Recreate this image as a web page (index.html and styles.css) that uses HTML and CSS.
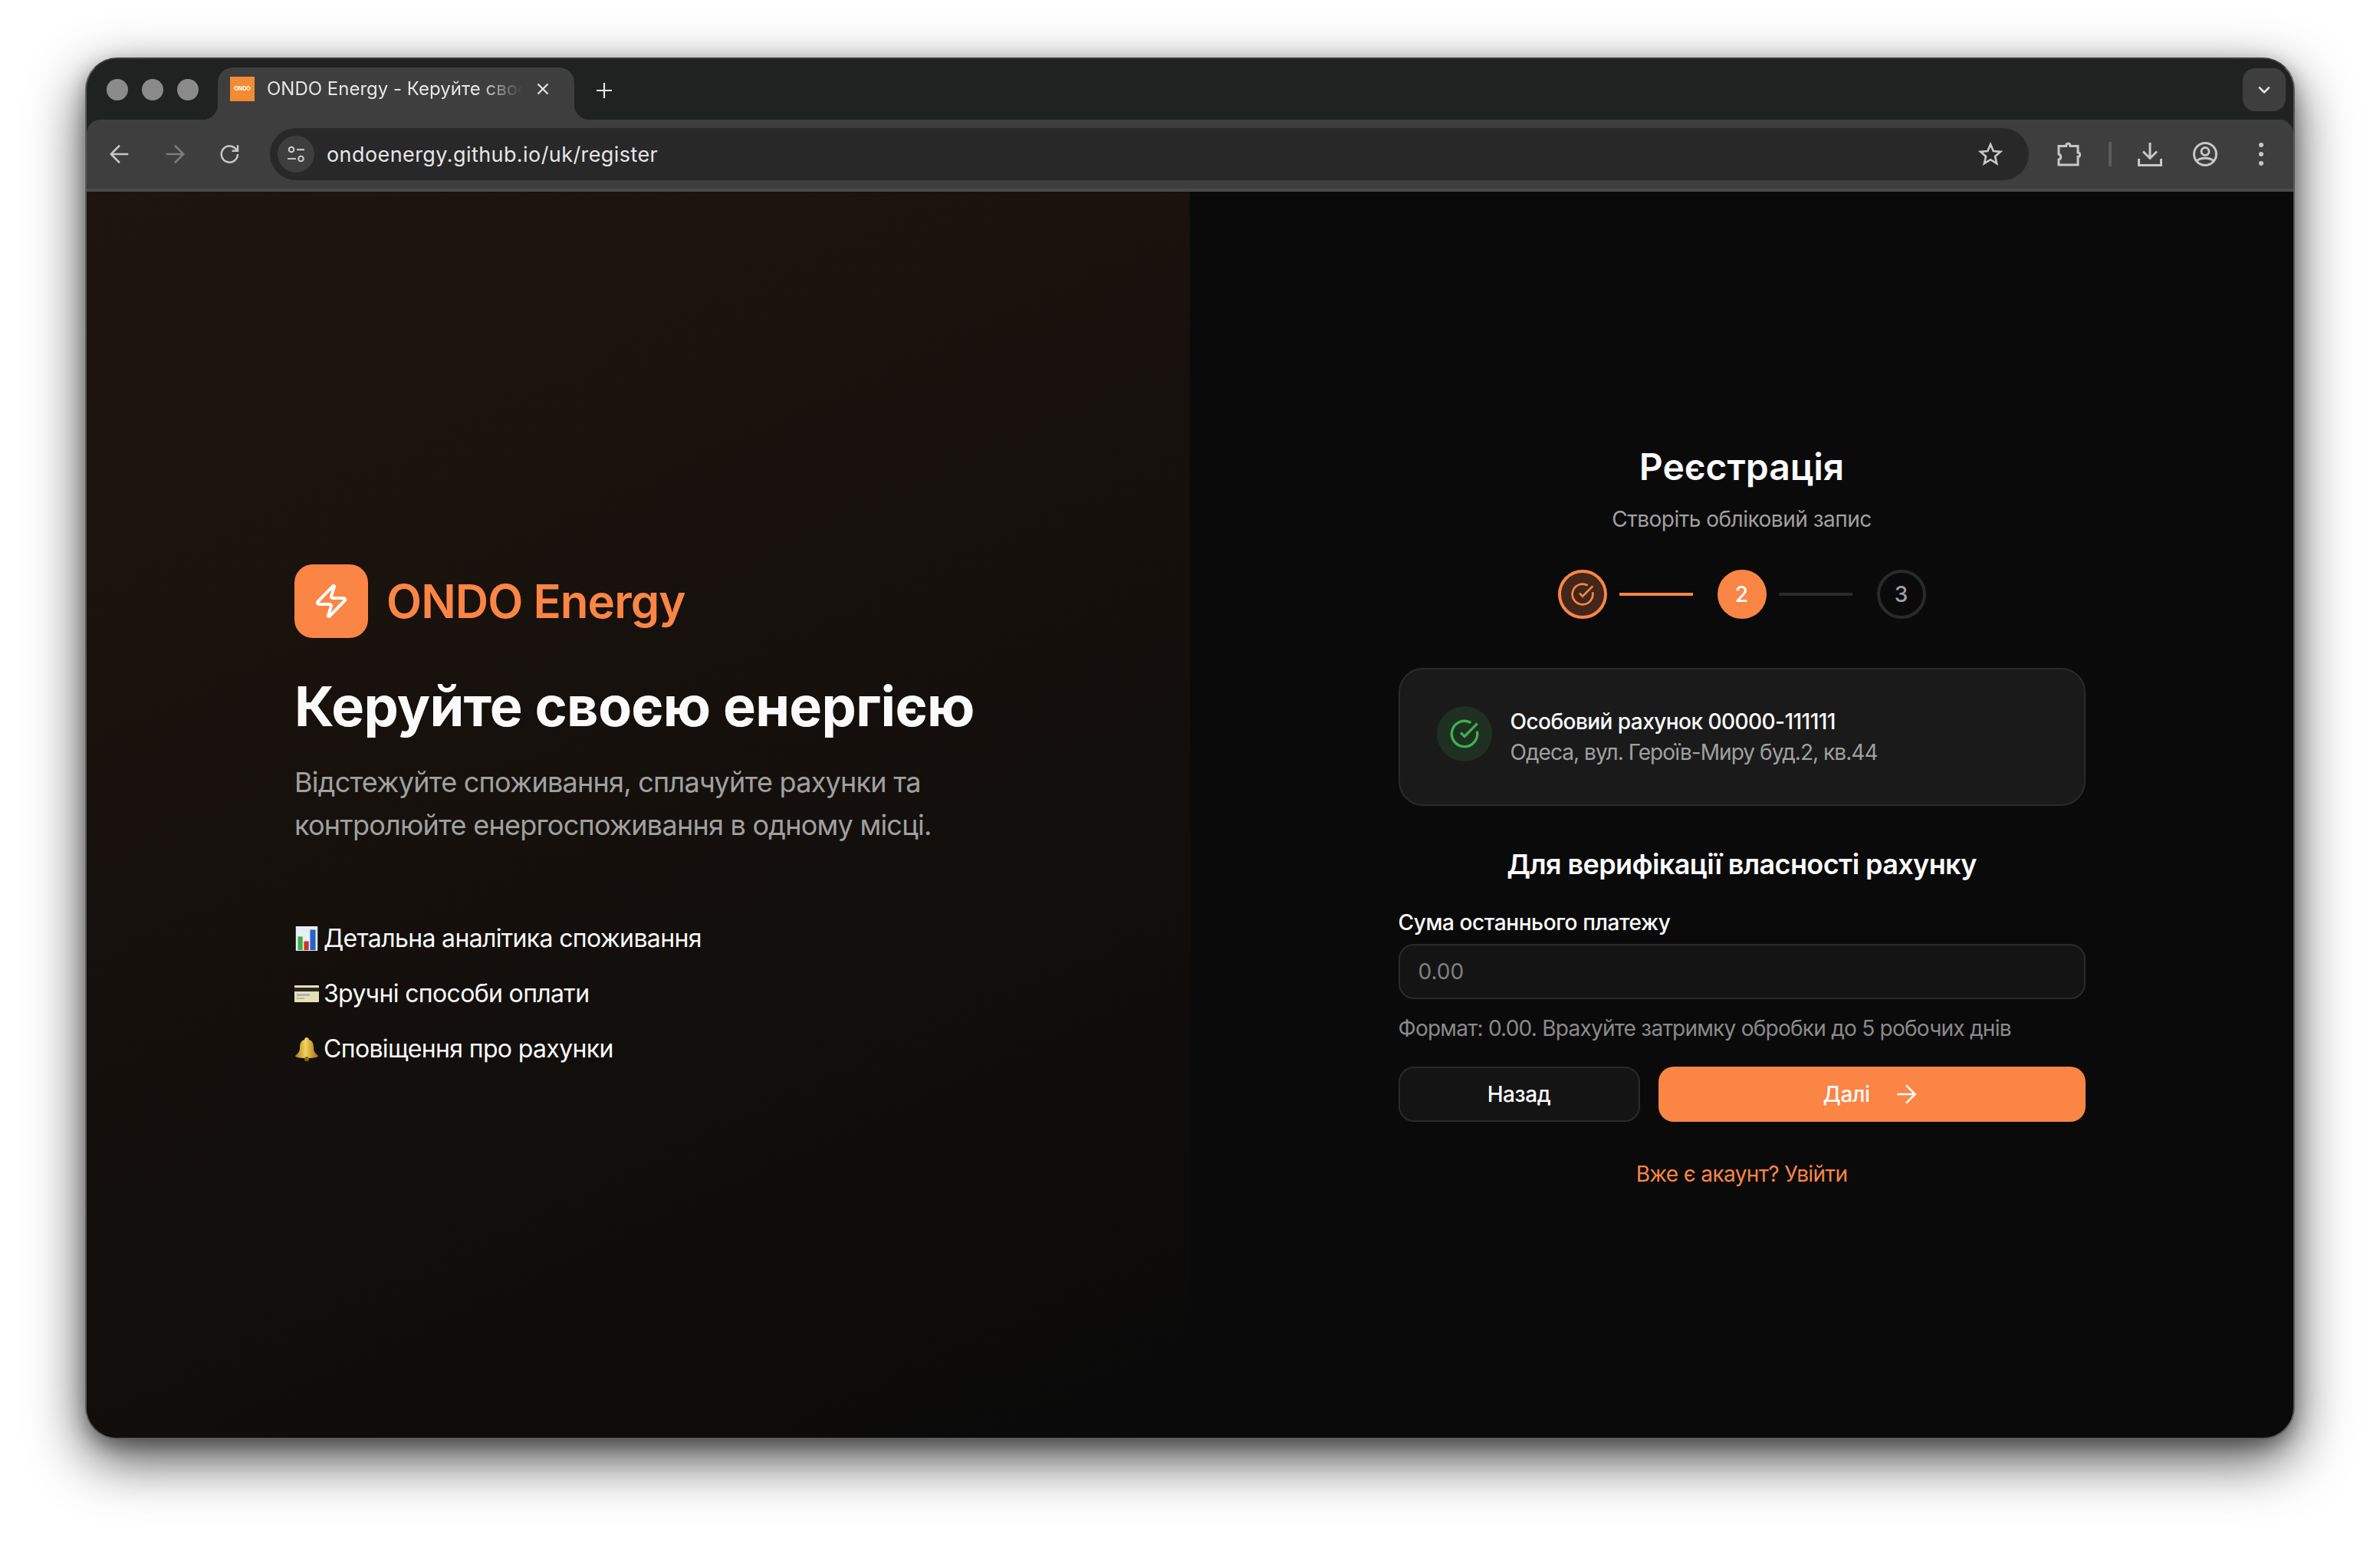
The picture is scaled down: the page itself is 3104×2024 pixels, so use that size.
FILE: index.html
```html
<!DOCTYPE html>
<html lang="uk">
<head>
  <meta charset="UTF-8" />
  <title>ONDO Energy - Реєстрація</title>
  <link rel="stylesheet" href="styles.css">
</head>
<body>
  <div class="window">
    <!-- Tab strip -->
    <div class="tabstrip">
      <div class="lights"><span></span><span></span><span></span></div>
      <div class="tab">
        <div class="favicon">ONDO</div>
        <div class="tab-title">ONDO Energy - Керуйте своє</div>
        <svg class="tab-close" viewBox="0 0 16 16"><path d="M1.500 1.500l13 13M14.500 1.500l-13 13"/></svg>
      </div>
      <svg class="new-tab" viewBox="0 0 20 20"><path d="M10 0v20M0 10h20"/></svg>
      <div class="tab-menu">
        <svg viewBox="0 0 16 16"><path d="M2 5l6 6 6-6"/></svg>
      </div>
    </div>

    <!-- Toolbar -->
    <div class="toolbar">
      <svg class="nav-icon" viewBox="0 0 24 24"><path d="M21 12H4M12 3l-9 9 9 9"/></svg>
      <svg class="nav-icon dim" viewBox="0 0 24 24"><path d="M3 12h17M12 3l9 9-9 9"/></svg>
      <svg class="nav-icon" viewBox="0 0 24 24"><path d="M20 12a8.500 8.500 0 1 1-2.600-6.100L20 8.500M20 2.500v6h-6"/></svg>
      <div class="omnibox">
        <div class="site-btn">
          <svg viewBox="0 0 24 24"><circle cx="6.500" cy="6.500" r="3"/><path d="M13 6.500h9M2 17.500h10"/><circle cx="18" cy="17.500" r="3"/></svg>
        </div>
        <div class="url">ondoenergy.github.io/uk/register</div>
        <svg class="star" viewBox="0 0 24 24"><path d="M12 2.500l2.800 6.500 7 .6-5.300 4.600 1.600 6.900-6.100-3.700-6.100 3.700 1.600-6.900-5.300-4.600 7-.6z"/></svg>
      </div>
      <svg class="tool-icon ext" viewBox="0 0 32 32"><path d="M3 5.500h9.500c0-4.500 5.500-4.500 5.500 0H28v8.500c3.500 0 3.500 5.500 0 5.500V30H3v-7c3.500-.5 3.500-6 0-7z"/></svg>
      <div class="tool-sep"></div>
      <svg class="tool-icon dl" viewBox="0 0 32 32"><path d="M16 1v20M7 12.500l9 9 9-9M1.500 22v8.500h29V22"/></svg>
      <svg class="tool-icon prof" viewBox="0 0 32 32"><circle cx="16" cy="16" r="14.500"/><circle cx="16" cy="12.500" r="5"/><path d="M5 25c5-5 17-5 22 0"/></svg>
      <div class="tool-dots"><span></span><span></span><span></span></div>
    </div>

    <!-- Page -->
    <div class="page">
      <section class="hero">
        <div class="brand">
          <div class="brand-icon">
            <svg viewBox="0 0 24 24"><path d="M4 14a1 1 0 0 1-.78-1.630l9.900-10.200a.5.5 0 0 1 .86.46l-1.920 6.020A1 1 0 0 0 13 10h7a1 1 0 0 1 .78 1.630l-9.900 10.200a.5.5 0 0 1-.86-.46l1.920-6.020A1 1 0 0 0 11 14z"/></svg>
          </div>
          <div class="brand-name">ONDO Energy</div>
        </div>
        <h1>Керуйте своєю енергією</h1>
        <p class="lead">Відстежуйте споживання, сплачуйте рахунки та<br>контролюйте енергоспоживання в одному місці.</p>
        <ul class="features">
          <li>
            <svg class="emoji" viewBox="0 0 32 36">
              <rect width="32" height="36" fill="#e8eef5"/>
              <rect x="3" y="15" width="7" height="20" fill="#3fae49"/>
              <rect x="12" y="22" width="7" height="13" fill="#c8322b"/>
              <rect x="21" y="5" width="8" height="30" fill="#2464c8"/>
            </svg>
            Детальна аналітика споживання
          </li>
          <li>
            <svg class="emoji" viewBox="0 0 32 24">
              <rect y="1" width="32" height="22" rx="1" fill="#e9e0b4"/>
              <rect y="4" width="32" height="5" fill="#2a2a20"/>
              <rect x="3" y="12" width="17" height="3" fill="#a9b5c8"/>
              <rect x="3" y="17" width="10" height="2" fill="#c4b98a"/>
            </svg>
            Зручні способи оплати
          </li>
          <li>
            <svg class="emoji" viewBox="0 0 32 32">
              <defs>
                <linearGradient id="bell" x1="0" x2="1">
                  <stop offset="0" stop-color="#a67c16"/>
                  <stop offset=".45" stop-color="#f4d35e"/>
                  <stop offset="1" stop-color="#9a7012"/>
                </linearGradient>
              </defs>
              <path d="M16 1c2 0 3 1.500 3 3 5 1 6 6 6 11 0 5 4 8 6 10 0 2-6 3-15 3S1 27 1 25c2-2 6-5 6-10S8 5 13 4c0-1.500 1-3 3-3z" fill="url(#bell)"/>
              <circle cx="16" cy="29" r="3" fill="#8a6410"/>
            </svg>
            Сповіщення про рахунки
          </li>
        </ul>
      </section>

      <section class="panel">
        <div class="form-box">
          <h2>Реєстрація</h2>
          <p class="sub">Створіть обліковий запис</p>

          <div class="steps">
            <div class="step done">
              <svg viewBox="0 0 24 24"><path d="M21.801 10A10 10 0 1 1 17 3.335"/><path d="m9 11 3 3L22 4"/></svg>
            </div>
            <div class="step-line on"></div>
            <div class="step active">2</div>
            <div class="step-line"></div>
            <div class="step">3</div>
          </div>

          <div class="account">
            <div class="account-icon">
              <svg viewBox="0 0 24 24"><path d="M21.801 10A10 10 0 1 1 17 3.335"/><path d="m9 11 3 3L22 4"/></svg>
            </div>
            <div>
              <div class="account-title">Особовий рахунок 00000-111111</div>
              <div class="account-addr">Одеса, вул. Героїв-Миру буд.2, кв.44</div>
            </div>
          </div>

          <h3>Для верифікації власності рахунку</h3>

          <label class="field-label" for="amount">Сума останнього платежу</label>
          <input class="field" id="amount" type="text" placeholder="0.00">
          <p class="hint">Формат: 0.00. Врахуйте затримку обробки до 5 робочих днів</p>

          <div class="actions">
            <button class="btn btn-back" type="button">Назад</button>
            <button class="btn btn-next" type="button">
              Далі
              <svg viewBox="0 0 24 24"><path d="M5 12h14"/><path d="m12 5 7 7-7 7"/></svg>
            </button>
          </div>

          <a class="login-link" href="#">Вже є акаунт? Увійти</a>
        </div>
      </section>
    </div>
  </div>
</body>
</html>
```

FILE: styles.css
```css
/* General */
* {
  box-sizing: border-box;
}

body {
  margin: 0;
  padding: 75px 0 0 111px;
  height: 2024px;
  overflow: hidden;
  background-color: #fff;
  font-family: Inter, "Noto Sans", sans-serif;
  color: #fafafa;
}

.window {
  width: 2882px;
  height: 1802px;
  display: flex;
  flex-direction: column;
  border: 2px solid #5c5c5c;
  border-top-color: #3a3a3a;
  border-radius: 42px;
  overflow: hidden;
  background-color: #202221;
  box-shadow: 0 26px 72px rgba(0, 0, 0, 0.7), 0 8px 24px rgba(0, 0, 0, 0.3);
}

/* Tab strip */
.tabstrip {
  height: 79px;
  flex: none;
  display: flex;
  align-items: flex-end;
  background-color: #202221;
  position: relative;
}

.lights {
  display: flex;
  gap: 18px;
  margin: 0 0 25px 26px;
}

.lights span {
  width: 28px;
  height: 28px;
  border-radius: 50%;
  background-color: #8a8a8a;
}

.tab {
  width: 465px;
  height: 68px;
  margin-left: 25px;
  padding: 12px 22px 0 16px;
  display: flex;
  gap: 16px;
  background-color: #3e3e3e;
  border-radius: 20px 20px 0 0;
  position: relative;
}

.tab::before,
.tab::after {
  content: "";
  position: absolute;
  bottom: 0;
  width: 20px;
  height: 20px;
}

.tab::before {
  left: -20px;
  background: radial-gradient(circle at 0 0, #202221 20px, #3e3e3e 20.5px);
}

.tab::after {
  right: -20px;
  background: radial-gradient(circle at 100% 0, #202221 20px, #3e3e3e 20.5px);
}

.favicon {
  width: 32px;
  height: 32px;
  flex: none;
  background-color: #f28c34;
  color: #fff;
  font-size: 7px;
  font-weight: 700;
  line-height: 32px;
  text-align: center;
}

.tab-title {
  width: 344px;
  flex: none;
  white-space: nowrap;
  font-size: 24px;
  line-height: 32px;
  color: #e6e6e6;
  -webkit-mask-image: linear-gradient(to right, #000 80%, transparent 97%);
  mask-image: linear-gradient(to right, #000 80%, transparent 97%);
}

.tab-close {
  width: 16px;
  height: 16px;
  flex: none;
  margin: 8px 0 0 -8px;
}

.tab-close path,
.new-tab path,
.tab-menu path {
  fill: none;
  stroke: #e6e6e6;
  stroke-width: 2.2;
}

.new-tab {
  width: 20px;
  height: 20px;
  margin: 0 0 28px 29px;
}

.tab-menu {
  width: 56px;
  height: 56px;
  margin: 0 10px 11px auto;
  display: flex;
  align-items: center;
  justify-content: center;
  background-color: #3e3e3e;
  border-radius: 16px;
}

.tab-menu svg {
  width: 18px;
  height: 18px;
}

/* Toolbar */
.toolbar {
  height: 94px;
  flex: none;
  display: flex;
  align-items: center;
  padding: 0 0 0 28px;
  background-color: #3e3e3e;
  border-radius: 18px 18px 0 0;
  border-bottom: 4px solid #4a4a4a;
}

.nav-icon {
  width: 30px;
  height: 30px;
  flex: none;
  margin-right: 42px;
}

.nav-icon path,
.tool-icon path,
.tool-icon circle,
.star path,
.site-btn path,
.site-btn circle {
  fill: none;
  stroke: #c7c7c7;
  stroke-width: 2;
}

.nav-icon.dim path {
  stroke: #7c7c7c;
}

.omnibox {
  width: 2294px;
  height: 68px;
  flex: none;
  margin-left: -5px;
  padding: 0 34px 0 10px;
  display: flex;
  align-items: center;
  background-color: #282828;
  border-radius: 34px;
}

.site-btn {
  width: 48px;
  height: 48px;
  flex: none;
  display: flex;
  align-items: center;
  justify-content: center;
  background-color: #3e3e3e;
  border-radius: 50%;
}

.site-btn svg {
  width: 26px;
  height: 26px;
}

.url {
  margin-left: 16px;
  font-size: 27px;
  letter-spacing: 0.42px;
  color: #e6e6e6;
}

.star {
  width: 32px;
  height: 32px;
  margin-left: auto;
}

.tool-icon {
  width: 32px;
  height: 32px;
  flex: none;
}

.tool-icon path,
.tool-icon circle {
  stroke-width: 3;
}

.ext {
  margin-left: 36px;
}

.tool-sep {
  width: 4px;
  height: 32px;
  flex: none;
  margin: 0 34px 0 36px;
  background-color: #5c5c5c;
}

.dl {
  margin-right: 40px;
}

.tool-dots {
  width: 8px;
  margin-left: 54px;
  display: flex;
  flex-direction: column;
  gap: 6px;
}

.tool-dots span {
  width: 6px;
  height: 6px;
  border-radius: 50%;
  background-color: #c7c7c7;
}

/* Page */
.page {
  flex: 1;
  display: grid;
  grid-template-columns: 1fr 1fr;
  background-color: #0a0a0a;
  min-height: 0;
}

.hero {
  display: flex;
  flex-direction: column;
  justify-content: center;
  padding: 14px 0 0 271px;
  background: linear-gradient(155deg, #1f150f 0%, #19120d 30%, #0a0a0a 100%);
}

.brand {
  display: flex;
  align-items: center;
  gap: 24px;
}

.brand-icon {
  width: 96px;
  height: 96px;
  display: flex;
  align-items: center;
  justify-content: center;
  background-color: #fb8545;
  border-radius: 24px;
}

.brand-icon svg {
  width: 48px;
  height: 48px;
}

.brand-icon path {
  fill: none;
  stroke: #fff;
  stroke-width: 2;
  stroke-linejoin: round;
}

.brand-name {
  font-size: 60px;
  font-weight: 600;
  letter-spacing: -0.95px;
  color: #fb8545;
}

h1 {
  margin: 44px 0 0;
  font-size: 72px;
  line-height: 90px;
  font-weight: 700;
  letter-spacing: -0.7px;
}

.lead {
  margin: 26px 0 0;
  font-size: 36px;
  line-height: 56px;
  letter-spacing: -0.75px;
  color: #a0a0a0;
}

.features {
  list-style: none;
  margin: 84px 0 0;
  padding: 0;
}

.features li {
  height: 72px;
  display: flex;
  align-items: center;
  gap: 6px;
  font-size: 32px;
  letter-spacing: -0.65px;
}

.emoji {
  width: 32px;
  height: 32px;
  flex: none;
}

/* Form */
.panel {
  display: flex;
  align-items: center;
  justify-content: center;
}

.form-box {
  width: 896px;
  padding-top: 6px;
}

h2 {
  margin: 0;
  font-size: 48px;
  line-height: 56px;
  font-weight: 600;
  text-align: center;
}

.sub {
  margin: 20px 0 0;
  font-size: 28px;
  line-height: 40px;
  letter-spacing: -0.5px;
  text-align: center;
  color: #a0a0a0;
}

.steps {
  margin-top: 46px;
  display: flex;
  align-items: center;
  justify-content: center;
  gap: 16px;
}

.step {
  width: 64px;
  height: 64px;
  flex: none;
  display: flex;
  align-items: center;
  justify-content: center;
  border: 4px solid #2a2a2a;
  border-radius: 50%;
  font-size: 28px;
  font-weight: 500;
  color: #a0a0a0;
}

.step.done {
  border-color: #fb8545;
  background-color: #42261a;
}

.step.done svg {
  width: 32px;
  height: 32px;
}

.step.done path {
  fill: none;
  stroke: #fb8545;
  stroke-width: 2;
}

.step.active {
  border-color: #fb8545;
  background-color: #fb8545;
  color: #fff;
}

.step-line {
  width: 96px;
  height: 4px;
  margin-right: 16px;
  background-color: #2a2a2a;
}

.step-line.on {
  background-color: #fb8545;
}

.account {
  height: 180px;
  margin-top: 64px;
  padding: 48px;
  display: flex;
  align-items: flex-start;
  gap: 24px;
  background-color: #1a1a1a;
  border: 2px solid #2a2a2a;
  border-radius: 32px;
}

.account-icon {
  width: 72px;
  height: 72px;
  flex: none;
  display: flex;
  align-items: center;
  justify-content: center;
  background-color: #1f2f21;
  border-radius: 50%;
}

.account-icon svg {
  width: 40px;
  height: 40px;
}

.account-icon path {
  fill: none;
  stroke: #3cb34f;
  stroke-width: 2;
}

.account-title {
  font-size: 28px;
  line-height: 40px;
  font-weight: 500;
  letter-spacing: -0.55px;
}

.account-addr {
  font-size: 28px;
  line-height: 40px;
  letter-spacing: -0.95px;
  color: #a0a0a0;
}

h3 {
  margin: 52px 0 0;
  font-size: 36px;
  line-height: 48px;
  font-weight: 600;
  letter-spacing: -0.6px;
  text-align: center;
}

.field-label {
  display: block;
  margin-top: 32px;
  font-size: 28px;
  line-height: 40px;
  font-weight: 500;
  letter-spacing: -0.4px;
}

.field {
  display: block;
  width: 100%;
  height: 72px;
  margin-top: 8px;
  padding: 0 24px;
  background-color: #141414;
  border: 2px solid #2a2a2a;
  border-radius: 20px;
  font-family: inherit;
  font-size: 28px;
  color: #fafafa;
}

.field::placeholder {
  color: #808080;
}

.hint {
  margin: 18px 0 0;
  font-size: 28px;
  line-height: 40px;
  letter-spacing: -0.75px;
  color: #8a8a8a;
}

.actions {
  margin-top: 30px;
  display: flex;
  gap: 24px;
}

.btn {
  height: 72px;
  display: flex;
  align-items: center;
  justify-content: center;
  border-radius: 20px;
  font-family: inherit;
  font-size: 28px;
  font-weight: 500;
  letter-spacing: -0.4px;
  color: #fafafa;
}

.btn-back {
  width: 315px;
  flex: none;
  background-color: #141414;
  border: 2px solid #2a2a2a;
}

.btn-next {
  flex: 1;
  gap: 27px;
  padding-left: 7px;
  background-color: #fb8545;
  border: none;
}

.btn-next svg {
  width: 40px;
  height: 40px;
}

.btn-next path {
  fill: none;
  stroke: #fff;
  stroke-width: 1.5;
}

.login-link {
  display: block;
  margin-top: 48px;
  font-size: 28px;
  line-height: 40px;
  letter-spacing: -0.6px;
  text-align: center;
  text-decoration: none;
  color: #fb8545;
}
```
